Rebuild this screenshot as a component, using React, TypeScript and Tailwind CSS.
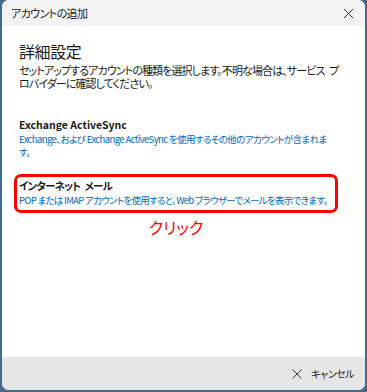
import React from "react";

const font = {
  fontFamily: '"Noto Sans CJK JP", "Noto Sans", sans-serif',
  fontFeatureSettings: '"palt"',
};

export default function App() {
  return (
    <div className="w-[367px] h-[392px] bg-[#47698a] p-[2px] pt-0" style={font}>
      <div className="w-full h-[390px] bg-white rounded-[7px] overflow-hidden flex flex-col">
        <div className="h-[26px] bg-[#f3f3f3] flex items-center justify-between pl-[9px] pr-[10px] shrink-0">
          <span className="text-[11px] tracking-[-0.6px] text-[#1a1a1a] leading-none">アカウントの追加</span>
          <svg width="11" height="11" viewBox="0 0 11 11" className="mr-[1px]">
            <path d="M1 1L10 10M10 1L1 10" stroke="#333" strokeWidth="1" />
          </svg>
        </div>
        <div className="flex-1 flex flex-col pl-[17px] pr-[14px]">
          <div className="mt-[13px] text-[16px] tracking-[-0.4px] leading-[24px] text-[#1a1a1a]">詳細設定</div>
          <div className="mt-[1px] text-[11px] tracking-[-0.9px] leading-[13px] text-[#1a1a1a] pr-[8px]">
            {"セットアップするアカウントの種類を選択します。不明な場合は、サービス\u2002プロバイダーに確認してください。"}
          </div>
          <div className="mt-[28px] text-[10.5px] leading-[14px] font-bold text-[#1a1a1a]">Exchange ActiveSync</div>
          <div className="mt-[1px] text-[9.5px] tracking-[-0.6px] leading-[13px] text-[#0067c0] pr-[18px]">
            Exchange、および Exchange ActiveSync を使用するその他のアカウントが含まれます。
          </div>
          <div className="mt-[15px] -ml-[5px] w-[324px] border-[3px] border-[#ff0000] rounded-[7px] pl-[2px] pt-[2px] pb-[3px]">
            <div className="text-[10.5px] tracking-[-0.8px] leading-[14px] font-bold text-[#1a1a1a]">
              {"インターネット\u2002メール"}
            </div>
            <div className="mt-[1px] text-[9.5px] tracking-[-0.7px] leading-[13px] text-[#0067c0] whitespace-nowrap">
              POP または IMAP アカウントを使用すると、Web ブラウザーでメールを表示できます。
            </div>
          </div>
          <div className="mt-[3px] text-center w-[324px] -ml-[5px] text-[16px] leading-[22px] text-[#ff0000]">クリック</div>
        </div>
        <div className="h-[33px] bg-[#e6e6e6] flex items-center justify-end pr-[11px] gap-[9px] shrink-0">
          <svg width="10" height="10" viewBox="0 0 10 10">
            <path d="M0.5 0.5L9.5 9.5M9.5 0.5L0.5 9.5" stroke="#333" strokeWidth="1" />
          </svg>
          <span className="text-[10px] tracking-[-0.5px] text-[#1a1a1a] leading-none">キャンセル</span>
        </div>
      </div>
    </div>
  );
}
